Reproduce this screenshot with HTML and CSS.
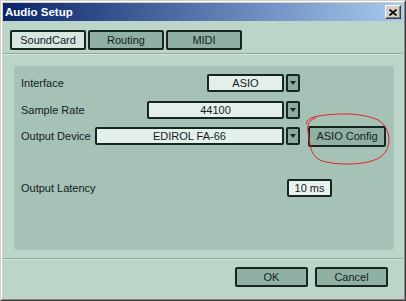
FILE: index.html
```html
<!DOCTYPE html>
<html lang="en">
<head>
    <meta charset="UTF-8">
    <title>Audio Setup</title>
    <link rel="stylesheet" href="styles.css">
</head>
<body>

<div class="window">
    <div class="frame">
        <div class="titlebar">
            <span class="title">Audio Setup</span>
            <span class="close">
                <svg width="8" height="7" viewBox="0 0 8 7"><path d="M0.5 0.5 L7.5 6.5 M7.5 0.5 L0.5 6.5" stroke="#000" stroke-width="1.6"/></svg>
            </span>
        </div>
        <div class="body">
            <div class="tabs">
                <div class="tab active">SoundCard</div>
                <div class="tab">Routing</div>
                <div class="tab">MIDI</div>
            </div>
            <div class="sep"></div>
            <div class="panel">
                <div class="row">
                    <span class="label">Interface</span>
                    <div class="select w-iface"><span class="value">ASIO</span><span class="arrow"></span></div>
                    <div class="trail"></div>
                </div>
                <div class="row rate">
                    <span class="label">Sample Rate</span>
                    <div class="select w-rate"><span class="value">44100</span><span class="arrow"></span></div>
                    <div class="trail"></div>
                </div>
                <div class="row">
                    <span class="label">Output Device</span>
                    <div class="select w-device"><span class="value">EDIROL FA-66</span><span class="arrow"></span></div>
                    <div class="trail"><div class="btn config">ASIO Config</div></div>
                </div>
                <div class="row latency">
                    <span class="label">Output Latency</span>
                    <div class="field">10 ms</div>
                    <div class="trail short"></div>
                </div>
            </div>
            <div class="sep"></div>
            <div class="footer">
                <div class="btn">OK</div>
                <div class="btn">Cancel</div>
            </div>
        </div>
    </div>

    <!-- red hand-drawn circle round the ASIO Config button -->
    <svg class="mark" width="100" height="60" viewBox="300 110 100 60">
        <path d="M306 124 C307 120 310 118 314 117 C322 115 333 114 345 114 C357 114 370 116 378 120 C385 124 389 132 389 140 C389 148 385 155 377 159 C368 163 357 164 347 164 C337 164 327 163 320 160 C314 157 311 151 310 144 C309 137 307 130 308 125 C309 121 312 119 316 118"
              fill="none" stroke="#e3202c" stroke-width="1"/>
    </svg>
</div>

</body>
</html>
```

FILE: styles.css
```css
body {
    margin: 0;
    font-family: "Liberation Sans", Arial, sans-serif;
    font-size: 11px;
    color: #13221d;
}
.window {
    position: relative;
    width: 406px;
    height: 301px;
    box-sizing: border-box;
    border: 1px solid;
    border-color: #d4d0c8 #404040 #404040 #d4d0c8;
}
.frame {
    height: 100%;
    box-sizing: border-box;
    border: 1px solid;
    border-color: #fff #808080 #808080 #fff;
    padding: 1px;
    background: #d4d0c8;
    display: flex;
    flex-direction: column;
}
.titlebar {
    height: 18px;
    display: flex;
    align-items: center;
    justify-content: space-between;
    padding: 0 2px;
    background: linear-gradient(to right, #0a246a, #a6caf0);
}
.title {
    color: #fff;
    font-weight: bold;
    font-size: 11.5px;
}
.close {
    width: 16px;
    height: 14px;
    box-sizing: border-box;
    display: flex;
    align-items: center;
    justify-content: center;
    background: #d4d0c8;
    border: 1px solid;
    border-color: #fff #404040 #404040 #fff;
    box-shadow: inset -1px -1px 0 #808080;
}
.body {
    flex: 1;
    background: #bcd5c9;
    padding-top: 9px;
}
.tabs {
    display: flex;
    gap: 2px;
    margin-left: 7px;
}
.tab {
    width: 76px;
    height: 20px;
    box-sizing: border-box;
    border: 2px solid #15271f;
    border-radius: 2px;
    background: #8fb0a3;
    display: flex;
    align-items: center;
    justify-content: center;
}
.tab.active {
    background: #d6e7df;
}
.sep {
    height: 1px;
    background: #8da79c;
    border-bottom: 1px solid #d7e7df;
    margin-top: 3px;
}
.panel {
    width: 380px;
    height: 184px;
    box-sizing: border-box;
    margin: 11px 0 8px 11px;
    padding: 8px 0 0 7px;
    background: #a6c1b6;
    border-radius: 3px;
    display: flex;
    flex-direction: column;
    gap: 8px;
}
.row {
    display: flex;
    align-items: center;
    height: 18px;
}
.row .label {
    flex: 1;
}
.row.rate {
    margin-top: 1px;
}
.row.latency {
    margin-top: 26px;
}
.trail {
    width: 94px;
    display: flex;
    justify-content: flex-start;
}
.trail.short {
    width: 62px;
}
.select {
    display: flex;
    gap: 2px;
    height: 18px;
}
.w-iface { width: 93px; }
.w-rate { width: 153px; }
.w-device { width: 205px; }
.select .value {
    flex: 1;
    box-sizing: border-box;
    border: 2px solid #15271f;
    border-radius: 2px;
    background: #e4efea;
    display: flex;
    align-items: center;
    justify-content: center;
}
.select .arrow {
    width: 14px;
    box-sizing: border-box;
    border: 2px solid #15271f;
    border-radius: 2px;
    background: #8ea99e;
    display: flex;
    align-items: center;
    justify-content: center;
}
.select .arrow::after {
    content: "";
    border-left: 3.5px solid transparent;
    border-right: 3.5px solid transparent;
    border-top: 4px solid #15271f;
}
.field {
    width: 45px;
    height: 18px;
    box-sizing: border-box;
    border: 2px solid #15271f;
    border-radius: 2px;
    background: #e9f3ee;
    display: flex;
    align-items: center;
    justify-content: center;
}
.btn {
    width: 73px;
    height: 20px;
    box-sizing: border-box;
    border: 2px solid #15271f;
    border-radius: 2px;
    background: #8fb0a3;
    display: flex;
    align-items: center;
    justify-content: center;
}
.btn.config {
    width: 78px;
    height: 21px;
    margin-left: 8px;
}
.footer {
    display: flex;
    justify-content: flex-end;
    gap: 7px;
    margin-top: 7px;
    padding-right: 15px;
}
.mark {
    position: absolute;
    left: 299px;
    top: 109px;
}
```
